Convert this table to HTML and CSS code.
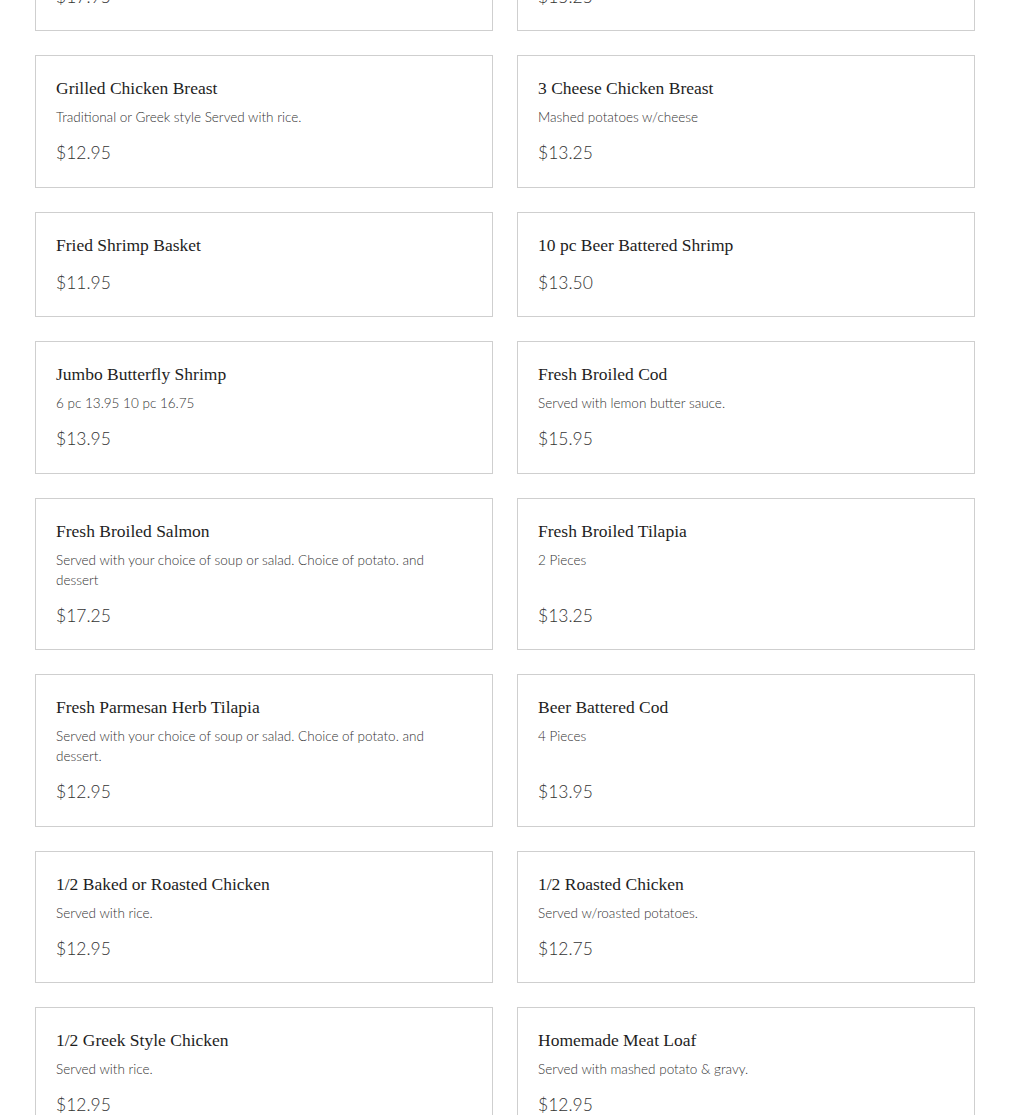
FILE: index.html
```html
<!DOCTYPE html>
<html lang="en">
<head>
<meta charset="utf-8">
<title>Menu</title>
<link rel="stylesheet" href="styles.css">
</head>
<body>
<main class="menu">
  <section class="item">
    <h3 class="name">Chicken Parmesan</h3>
    <p class="desc">Served with spaghetti.</p>
    <div class="price">$17.95</div>
  </section>
  <section class="item">
    <h3 class="name">Chicken Marsala</h3>
    <p class="desc">Served with rice.</p>
    <div class="price">$15.25</div>
  </section>

  <section class="item">
    <h3 class="name">Grilled Chicken Breast</h3>
    <p class="desc">Traditional or Greek style Served with rice.</p>
    <div class="price">$12.95</div>
  </section>
  <section class="item">
    <h3 class="name">3 Cheese Chicken Breast</h3>
    <p class="desc">Mashed potatoes w/cheese</p>
    <div class="price">$13.25</div>
  </section>

  <section class="item">
    <h3 class="name">Fried Shrimp Basket</h3>
    <div class="price">$11.95</div>
  </section>
  <section class="item">
    <h3 class="name">10 pc Beer Battered Shrimp</h3>
    <div class="price">$13.50</div>
  </section>

  <section class="item">
    <h3 class="name">Jumbo Butterfly Shrimp</h3>
    <p class="desc">6 pc 13.95 10 pc 16.75</p>
    <div class="price">$13.95</div>
  </section>
  <section class="item">
    <h3 class="name">Fresh Broiled Cod</h3>
    <p class="desc">Served with lemon butter sauce.</p>
    <div class="price">$15.95</div>
  </section>

  <section class="item">
    <h3 class="name">Fresh Broiled Salmon</h3>
    <p class="desc">Served with your choice of soup or salad. Choice of potato. and dessert</p>
    <div class="price">$17.25</div>
  </section>
  <section class="item">
    <h3 class="name">Fresh Broiled Tilapia</h3>
    <p class="desc">2 Pieces</p>
    <div class="price">$13.25</div>
  </section>

  <section class="item">
    <h3 class="name">Fresh Parmesan Herb Tilapia</h3>
    <p class="desc">Served with your choice of soup or salad. Choice of potato. and dessert.</p>
    <div class="price">$12.95</div>
  </section>
  <section class="item">
    <h3 class="name">Beer Battered Cod</h3>
    <p class="desc">4 Pieces</p>
    <div class="price">$13.95</div>
  </section>

  <section class="item">
    <h3 class="name">1/2 Baked or Roasted Chicken</h3>
    <p class="desc">Served with rice.</p>
    <div class="price">$12.95</div>
  </section>
  <section class="item">
    <h3 class="name">1/2 Roasted Chicken</h3>
    <p class="desc">Served w/roasted potatoes.</p>
    <div class="price">$12.75</div>
  </section>

  <section class="item">
    <h3 class="name">1/2 Greek Style Chicken</h3>
    <p class="desc">Served with rice.</p>
    <div class="price">$12.95</div>
  </section>
  <section class="item">
    <h3 class="name">Homemade Meat Loaf</h3>
    <p class="desc">Served with mashed potato &amp; gravy.</p>
    <div class="price">$12.95</div>
  </section>
</main>
</body>
</html>
```

FILE: styles.css
```css
html, body {
  margin: 0;
  padding: 0;
  background: #ffffff;
}

body {
  overflow: hidden;
  height: 1115px;
}

.menu {
  display: grid;
  grid-template-columns: 458px 458px;
  column-gap: 24px;
  row-gap: 24px;
  padding: 0 35px;
  margin-top: -101.5px;
}

.item {
  display: flex;
  flex-direction: column;
  border: 1px solid #cfcfcf;
  padding: 20px;
  background: #fff;
}

.name {
  margin: 0;
  font-family: "Liberation Serif", "DejaVu Serif", serif;
  font-weight: normal;
  font-size: 17.5px;
  line-height: 24px;
  color: #1e1e1e;
}

.desc {
  margin: 7px 0 0 0;
  font-family: "Lato", "Open Sans", sans-serif;
  font-weight: 300;
  font-size: 13.5px;
  line-height: 20px;
  color: #333333;
  padding-right: 40px;
}

.price {
  margin-top: auto;
  padding-top: 13px;
  font-family: "Lato", "Open Sans", sans-serif;
  font-weight: 300;
  font-size: 17.5px;
  line-height: 26.5px;
  color: #333333;
}
```
